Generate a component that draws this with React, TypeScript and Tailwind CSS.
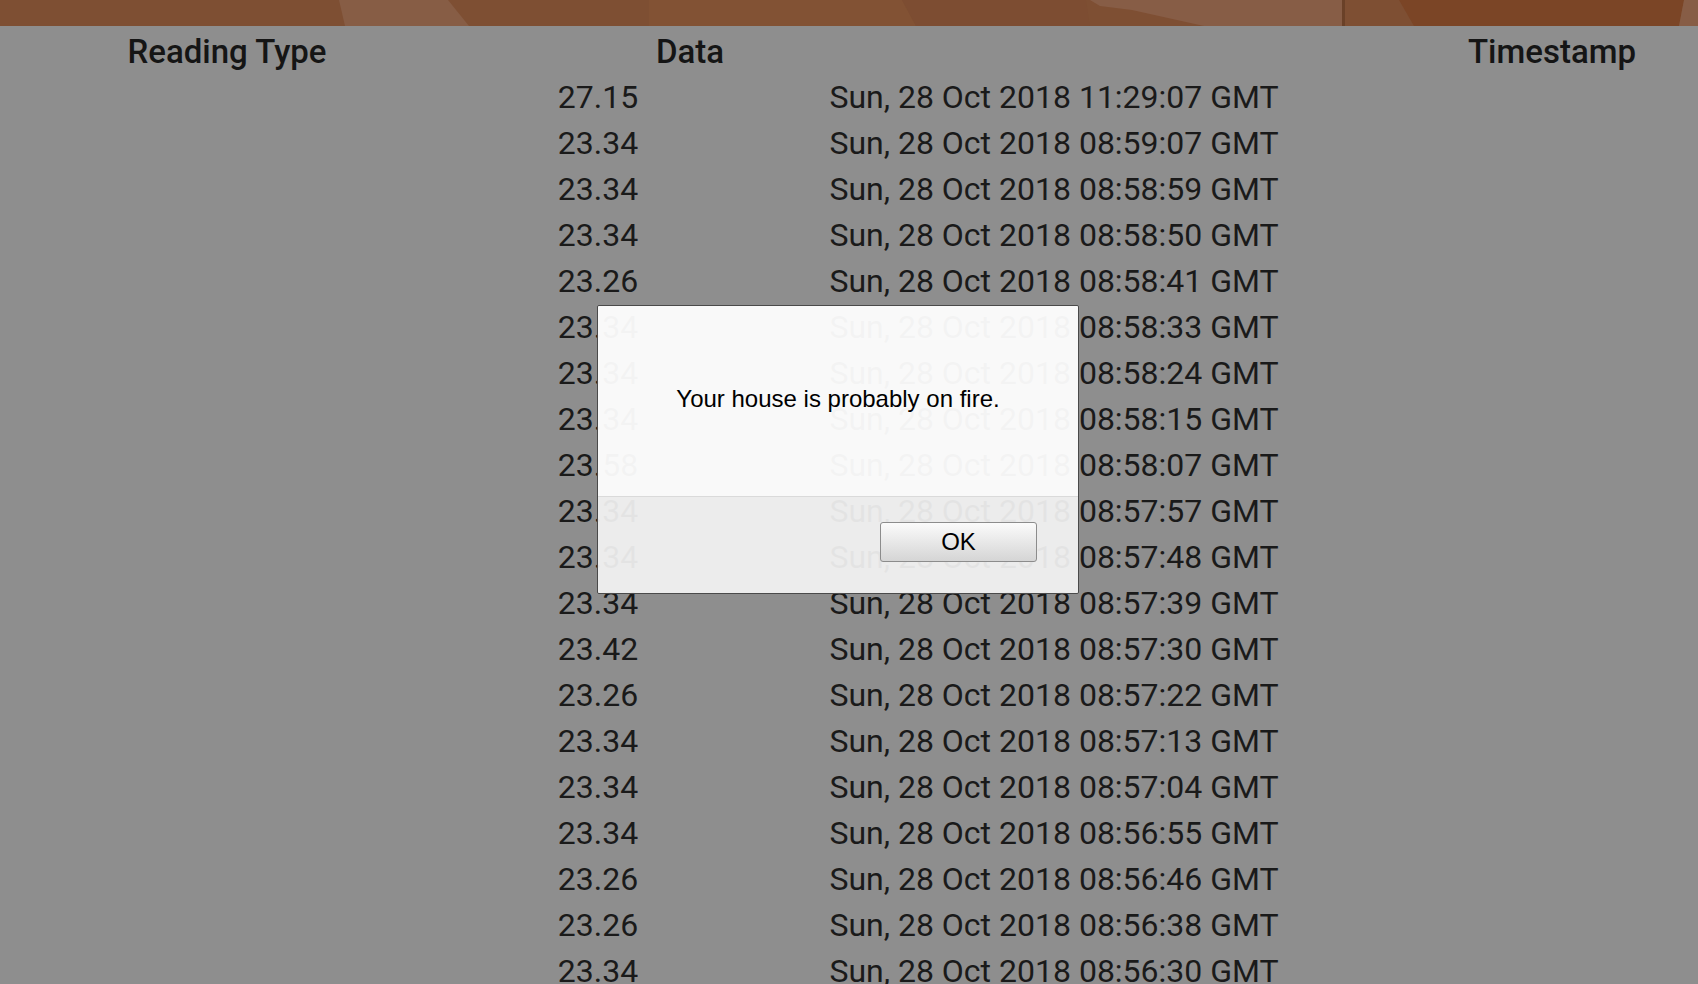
import React from 'react'

const readings: [string, string][] = [
  ['27.15', 'Sun, 28 Oct 2018 11:29:07 GMT'],
  ['23.34', 'Sun, 28 Oct 2018 08:59:07 GMT'],
  ['23.34', 'Sun, 28 Oct 2018 08:58:59 GMT'],
  ['23.34', 'Sun, 28 Oct 2018 08:58:50 GMT'],
  ['23.26', 'Sun, 28 Oct 2018 08:58:41 GMT'],
  ['23.34', 'Sun, 28 Oct 2018 08:58:33 GMT'],
  ['23.34', 'Sun, 28 Oct 2018 08:58:24 GMT'],
  ['23.34', 'Sun, 28 Oct 2018 08:58:15 GMT'],
  ['23.58', 'Sun, 28 Oct 2018 08:58:07 GMT'],
  ['23.34', 'Sun, 28 Oct 2018 08:57:57 GMT'],
  ['23.34', 'Sun, 28 Oct 2018 08:57:48 GMT'],
  ['23.34', 'Sun, 28 Oct 2018 08:57:39 GMT'],
  ['23.42', 'Sun, 28 Oct 2018 08:57:30 GMT'],
  ['23.26', 'Sun, 28 Oct 2018 08:57:22 GMT'],
  ['23.34', 'Sun, 28 Oct 2018 08:57:13 GMT'],
  ['23.34', 'Sun, 28 Oct 2018 08:57:04 GMT'],
  ['23.34', 'Sun, 28 Oct 2018 08:56:55 GMT'],
  ['23.26', 'Sun, 28 Oct 2018 08:56:46 GMT'],
  ['23.26', 'Sun, 28 Oct 2018 08:56:38 GMT'],
  ['23.34', 'Sun, 28 Oct 2018 08:56:30 GMT'],
  ['23.34', 'Sun, 28 Oct 2018 08:56:21 GMT'],
  ['23.26', 'Sun, 28 Oct 2018 08:56:12 GMT'],
]

function Banner() {
  // dimmed low-poly background strip at the top of the page
  return (
    <svg
      className="block h-[26px] w-full"
      viewBox="0 0 1698 26"
      preserveAspectRatio="none"
    >
      <rect x="0" y="0" width="1698" height="26" fill="#7e4f33" />
      <polygon points="649,0 902,0 916,26 649,26" fill="#825234" />
      <polygon points="339,0 448,0 469,26 345,26" fill="#875d45" />
      <polygon points="902,0 1086,0 1090,26 916,26" fill="#7d4d32" />
      <polygon points="1090,0 1343,0 1343,26 1204,26 1132,10 1100,6" fill="#875d46" />
      <rect x="1342" y="0" width="3" height="26" fill="#6a4128" />
      <polygon points="1399,0 1684,0 1679,26 1414,26" fill="#7b4526" />
      <polygon points="1684,0 1698,0 1698,26 1679,26" fill="#875d46" />
    </svg>
  )
}

export default function App() {
  return (
    <div className="relative h-[984px] overflow-hidden bg-[#8e8e8e] font-['Roboto',sans-serif] text-[#1a1a1a]">
      <Banner />

      {/* Column headers */}
      <div className="grid h-[48px] grid-cols-[454px_472px_1fr] items-center pt-[3px] text-[33px] font-medium leading-[45px] text-[#151515]">
        <div className="text-center">Reading Type</div>
        <div className="text-center">Data</div>
        <div className="pr-[62px] text-right">Timestamp</div>
      </div>

      {/* Readings */}
      <div className="flex flex-col">
        {readings.map(([value, time], i) => (
          <div
            key={i}
            className="grid h-[46px] grid-cols-[454px_288px_624px] items-center text-center text-[32px] leading-[46px]"
          >
            <div />
            <div>{value}</div>
            <div>{time}</div>
          </div>
        ))}
      </div>

      {/* Alert dialog */}
      <div className="absolute left-[597px] top-[305px] flex h-[289px] w-[482px] flex-col overflow-hidden rounded-[2px] border border-[#4a4a4a] font-['Liberation_Sans',Arial,sans-serif] text-black">
        <div className="flex h-[191px] items-center justify-center border-b border-[#dadada] bg-white/95 pb-[4px] text-[24px]">
          Your house is probably on fire.
        </div>
        <div className="flex flex-1 items-center justify-end bg-[#f3f3f3]/93 pr-[41px] pb-[7px]">
          <button className="h-[40px] w-[157px] rounded-[3px] border border-[#8c8c8c] bg-gradient-to-b from-[#fbfbfb] to-[#d5d5d5] text-[24px] leading-none text-black">
            OK
          </button>
        </div>
      </div>
    </div>
  )
}
